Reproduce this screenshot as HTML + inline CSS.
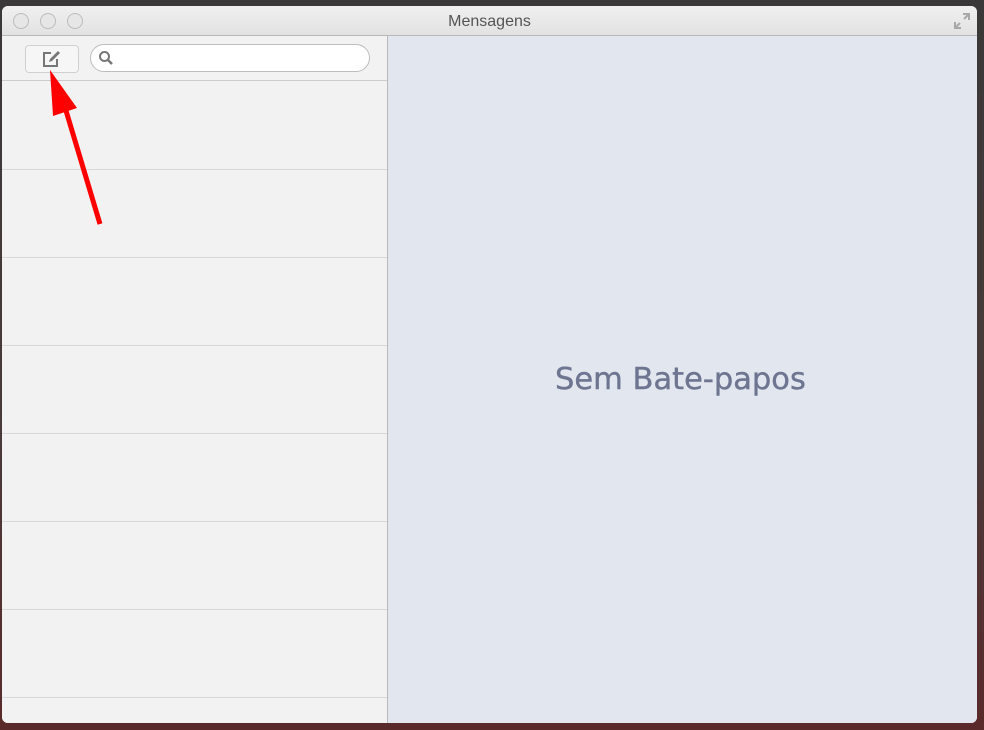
<!DOCTYPE html>
<html><head><meta charset="utf-8"><style>
html,body{margin:0;padding:0;width:984px;height:730px;overflow:hidden;background:#3b3536;font-family:"Liberation Sans",sans-serif}
.bg{position:absolute;inset:0;background:linear-gradient(180deg,#3a3838 0%,#4a3a3a 60%,#5a2a2a 100%)}
.win{position:absolute;left:2px;top:6px;width:975px;height:717px;border-radius:6px;overflow:hidden;background:#f2f2f2}
.title{position:absolute;left:0;top:0;width:100%;height:29px;background:linear-gradient(#f0f0f0,#e2e2e2);border-bottom:1px solid #b8b8b8;text-align:center;font-size:16px;color:#555;line-height:31px}
.dot{position:absolute;top:7px;width:14px;height:14px;border-radius:50%;border:1.5px solid #bcbcbc;background:#e6e6e6}
.side{position:absolute;left:0;top:30px;width:385px;height:687px;background:#f2f2f2;border-right:1px solid #b9b9b9}
.main{position:absolute;left:386px;top:30px;right:0;bottom:0;background:#e2e6ee}
.row{position:absolute;left:0;width:385px;border-top:1px solid #d8d8d8}
.btn{position:absolute;left:23px;top:9px;width:52px;height:26px;border:1px solid #d0d0d0;border-radius:4px;background:#f6f6f6}
.search{position:absolute;left:88px;top:8px;width:278px;height:26px;border:1.5px solid #bdbdbd;border-radius:14px;background:#fff}
.msg{position:absolute;left:555px;top:362px;font-family:"DejaVu Sans",sans-serif;font-size:30.5px;color:#6e7591;white-space:nowrap;-webkit-text-stroke:0.4px #6e7591}
</style></head><body>
<div class="bg"></div>
<div class="win">
 <div class="title">Mensagens
  <div class="dot" style="left:11px"></div><div class="dot" style="left:38px"></div><div class="dot" style="left:65px"></div>
  <svg style="position:absolute;right:6px;top:6px" width="18" height="18" viewBox="0 0 18 18"><path d="M10 2h6v6M16 2l-5 5M8 16H2v-6M2 16l5-5" stroke="#a8a8a8" stroke-width="2" fill="none"/></svg>
 </div>
 <div class="side">
  <div class="btn"><svg style="position:absolute;left:16px;top:4px" width="22" height="18" viewBox="0 0 22 18"><path d="M9 3H2v13h13V9" stroke="#777" stroke-width="2" fill="none"/><path d="M7 12l1-3 8-8 2 2-8 8z" fill="#777"/></svg></div>
  <div class="search"><svg style="position:absolute;left:7px;top:5px" width="16" height="16" viewBox="0 0 16 16"><circle cx="6.5" cy="6.5" r="4.5" stroke="#777" stroke-width="2" fill="none"/><path d="M10 10l4 4" stroke="#777" stroke-width="2.5"/></svg></div>
  <div class="row" style="top:44px;border-top-color:#ccc"></div>
  <div class="row" style="top:133px"></div>
  <div class="row" style="top:221px"></div>
  <div class="row" style="top:309px"></div>
  <div class="row" style="top:397px"></div>
  <div class="row" style="top:485px"></div>
  <div class="row" style="top:573px"></div>
  <div class="row" style="top:661px"></div>
 </div>
 <div class="main"></div>
</div>
<div class="msg">Sem Bate-papos</div>
<svg style="position:absolute;left:0;top:0" width="984" height="730"><path d="M64 104L100 224" stroke="#f00" stroke-width="5"/><path d="M50 70L53 116L77 108Z" fill="#f00"/></svg>
</body></html>
